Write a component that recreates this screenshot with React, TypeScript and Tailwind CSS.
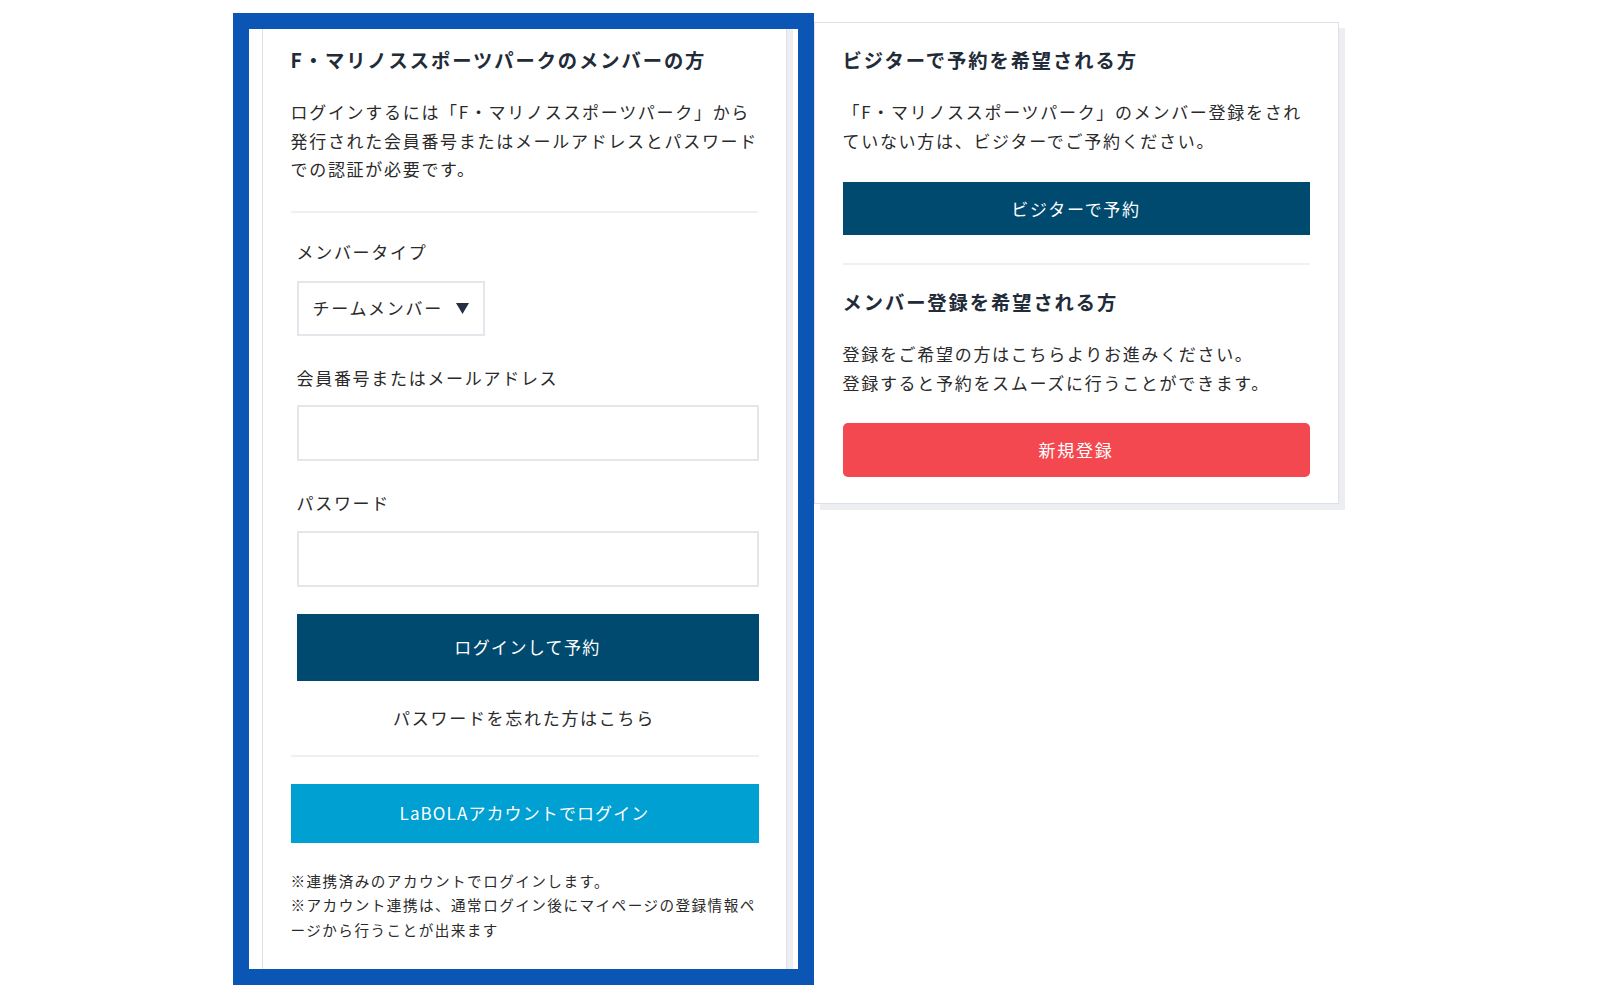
import React from "react";

const font = "font-['Noto_Sans_CJK_JP','Noto_Sans',sans-serif]";

const Divider = ({ className = "" }: { className?: string }) => (
  <div className={`h-[2px] bg-[#eef0f3] ${className}`} />
);

const MemberLogin: React.FC = () => {
  return (
    <div className="relative w-[525px] shrink-0">
      {/* highlight frame over the member card */}
      <div className="pointer-events-none absolute -left-[29px] -top-[9px] z-10 h-[972px] w-[581px] border-[16px] border-[#0b55b4]" />

      <div className="h-[948px] border border-[#dde1e7] bg-white pl-[28px] pr-[28px] pt-[23px] shadow-[6px_6px_0_0_#eceef1]">
        <h2 className="text-[19.3px] font-bold leading-[28px] tracking-[0.1em] text-[#222b38]">
          F・マリノススポーツパークのメンバーの方
        </h2>
        <p className="mt-[24px] whitespace-nowrap text-[17px] leading-[28.5px] tracking-[0.1em] text-[#2a2a2a]">
          ログインするには「F・マリノススポーツパーク」から
          <br />
          発行された会員番号またはメールアドレスとパスワード
          <br />
          での認証が必要です。
        </p>

        <Divider className="mt-[27px]" />

        <div className="ml-[6px] w-[462px]">
          <label className="mt-[25px] block text-[17px] leading-[28px] tracking-[0.1em] text-[#2a2a2a]">
            メンバータイプ
          </label>
          <div className="mt-[15px] flex h-[55px] w-[188px] items-center justify-between border-2 border-[#e3e6eb] pl-[14px] pr-[14px]">
            <span className="text-[17px] tracking-[0.1em] text-[#2a2a2a]">チームメンバー</span>
            <svg width="13" height="11" viewBox="0 0 13 11">
              <polygon points="0,0 13,0 6.5,11" fill="#243042" />
            </svg>
          </div>

          <label className="mt-[28px] block text-[17px] leading-[28px] tracking-[0.1em] text-[#2a2a2a]">
            会員番号またはメールアドレス
          </label>
          <input type="text" className="mt-[13px] block h-[56px] w-full border-2 border-[#e3e6eb] bg-white px-3 outline-none" />

          <label className="mt-[28px] block text-[17px] leading-[28px] tracking-[0.1em] text-[#2a2a2a]">
            パスワード
          </label>
          <input type="password" className="mt-[14px] block h-[56px] w-full border-2 border-[#e3e6eb] bg-white px-3 outline-none" />

          <button className="mt-[27px] flex h-[67px] w-full items-center justify-center bg-[#004a70] text-[17px] tracking-[0.08em] text-white">
            ログインして予約
          </button>
        </div>

        <p className="mt-[23px] text-center text-[17px] leading-[28px] tracking-[0.1em] text-[#2a2a2a]">
          パスワードを忘れた方はこちら
        </p>

        <Divider className="mt-[23px] w-[468px]" />

        <button className="mt-[27px] flex h-[59px] w-[468px] items-center justify-center bg-[#00a0d2] text-[17px] tracking-[0.065em] text-white">
          LaBOLAアカウントでログイン
        </button>

        <p className="mt-[26px] whitespace-nowrap text-[14.6px] leading-[24.5px] tracking-[0.1em] text-[#2a2a2a]">
          ※連携済みのアカウントでログインします。
          <br />
          ※アカウント連携は、通常ログイン後にマイページの登録情報ペ
          <br />
          ージから行うことが出来ます
        </p>
      </div>
    </div>
  );
};

const GuestPanel: React.FC = () => {
  return (
    <div className="h-[482px] w-[525px] shrink-0 border border-[#dde1e7] bg-white pl-[28px] pr-[28px] pt-[23px] shadow-[6px_6px_0_0_#eceef1]">
      <h2 className="text-[19.3px] font-bold leading-[28px] tracking-[0.1em] text-[#222b38]">
        ビジターで予約を希望される方
      </h2>
      <p className="mt-[24px] whitespace-nowrap text-[17px] leading-[28.5px] tracking-[0.1em] text-[#2a2a2a]">
        「F・マリノススポーツパーク」のメンバー登録をされ
        <br />
        ていない方は、ビジターでご予約ください。
      </p>
      <button className="mt-[27px] flex h-[53px] w-full items-center justify-center bg-[#004a70] text-[17px] tracking-[0.1em] text-white">
        ビジターで予約
      </button>

      <Divider className="mt-[28px]" />

      <h2 className="mt-[23px] text-[19.3px] font-bold leading-[28px] tracking-[0.1em] text-[#222b38]">
        メンバー登録を希望される方
      </h2>
      <p className="mt-[24px] whitespace-nowrap text-[17px] leading-[28.5px] tracking-[0.1em] text-[#2a2a2a]">
        登録をご希望の方はこちらよりお進みください。
        <br />
        登録すると予約をスムーズに行うことができます。
      </p>
      <button className="mt-[26px] flex h-[54px] w-full items-center justify-center rounded-[5px] bg-[#f34850] text-[17px] tracking-[0.1em] text-white">
        新規登録
      </button>
    </div>
  );
};

export default function App() {
  return (
    <div className={`h-[1000px] w-full overflow-hidden bg-white ${font}`}>
      <div className="mx-auto flex w-[1077px] items-start gap-[27px] pt-[22px]">
        <MemberLogin />
        <GuestPanel />
      </div>
    </div>
  );
}
